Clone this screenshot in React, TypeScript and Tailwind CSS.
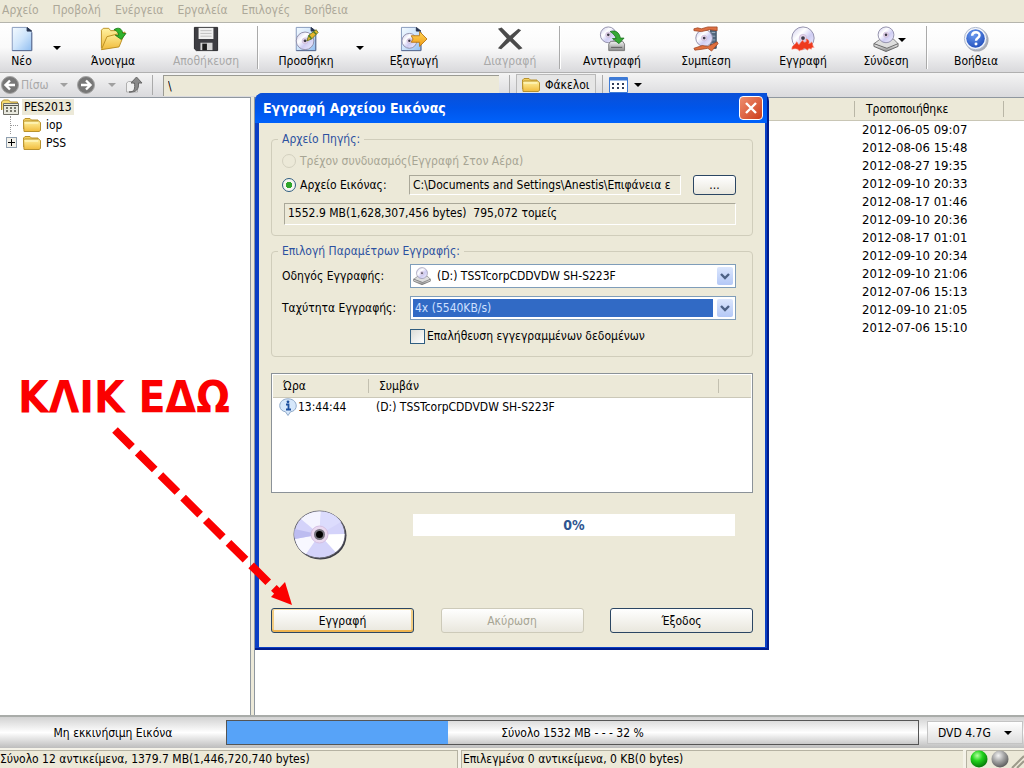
import type { ReactNode } from 'react'
import { clsx } from 'clsx'

const menuItems = [
  'Αρχείο',
  'Προβολή',
  'Ενέργεια',
  'Εργαλεία',
  'Επιλογές',
  'Βοήθεια',
]

const modifiedDates = [
  '2012-06-05 09:07',
  '2012-08-06 15:48',
  '2012-08-27 19:35',
  '2012-09-10 20:33',
  '2012-08-17 01:46',
  '2012-09-10 20:36',
  '2012-08-17 01:01',
  '2012-09-10 20:34',
  '2012-09-10 21:06',
  '2012-07-06 15:13',
  '2012-09-10 21:05',
  '2012-07-06 15:10',
]

// Gradients shared by all of the icons
function IconDefs() {
  return (
    <svg className="absolute size-0" aria-hidden="true">
      <defs>
        <linearGradient id="page" x1="0" y1="0" x2="1" y2="1">
          <stop offset="0" stopColor="#f4faff" />
          <stop offset="0.5" stopColor="#cfe5fb" />
          <stop offset="1" stopColor="#8fbdf0" />
        </linearGradient>
        <linearGradient id="folder" x1="0" y1="0" x2="0" y2="1">
          <stop offset="0" stopColor="#fff2a0" />
          <stop offset="1" stopColor="#f0bb3c" />
        </linearGradient>
        <linearGradient id="disc" x1="0" y1="0" x2="1" y2="1">
          <stop offset="0" stopColor="#c9c6ea" />
          <stop offset="0.35" stopColor="#ffffff" />
          <stop offset="0.6" stopColor="#cfcdf3" />
          <stop offset="1" stopColor="#f4f2ff" />
        </linearGradient>
        <linearGradient id="drive-body" x1="0" y1="0" x2="0" y2="1">
          <stop offset="0" stopColor="#f2f2f2" />
          <stop offset="1" stopColor="#8a8a8a" />
        </linearGradient>
        <linearGradient id="arrow" x1="0" y1="0" x2="0" y2="1">
          <stop offset="0" stopColor="#ffd75a" />
          <stop offset="1" stopColor="#f09a12" />
        </linearGradient>
        <radialGradient id="help" cx="0.4" cy="0.3" r="0.8">
          <stop offset="0" stopColor="#6b9bf0" />
          <stop offset="1" stopColor="#1c49b8" />
        </radialGradient>
        <radialGradient id="gray-ball" cx="0.4" cy="0.3" r="0.7">
          <stop offset="0" stopColor="#f4f4f4" />
          <stop offset="0.5" stopColor="#a4a4a4" />
          <stop offset="1" stopColor="#5e5e5e" />
        </radialGradient>
        <radialGradient id="green-ball" cx="0.4" cy="0.3" r="0.7">
          <stop offset="0" stopColor="#b4ffa0" />
          <stop offset="0.45" stopColor="#22d31c" />
          <stop offset="1" stopColor="#067a08" />
        </radialGradient>
      </defs>
    </svg>
  )
}

type SvgProps = {
  className?: string
  children: ReactNode
}

function ToolSvg({ className = 'size-7', children }: SvgProps) {
  return (
    <svg viewBox="0 0 28 28" className={className} aria-hidden="true">
      {children}
    </svg>
  )
}

function Disc({ cx, cy, r }: { cx: number; cy: number; r: number }) {
  return (
    <g>
      <circle cx={cx} cy={cy} r={r} fill="url(#disc)" stroke="#8f8ca8" />
      <circle cx={cx} cy={cy} r={r / 3} fill="#e6d6ec" stroke="#c3b2cf" strokeWidth="0.6" />
      <circle cx={cx} cy={cy} r={r / 6} fill="#3c3a48" />
    </g>
  )
}

function Page() {
  return (
    <g>
      <path d="M3.5 1.5h15l6 5v20h-21z" fill="url(#page)" stroke="#8296bb" />
      <path d="M24.5 7v19.5H3.5" fill="none" stroke="#56688f" />
      <path d="M19.5 1.5v4h5z" fill="#27344f" stroke="#27344f" />
    </g>
  )
}

function NewIcon() {
  return (
    <ToolSvg>
      <Page />
    </ToolSvg>
  )
}

function OpenIcon() {
  return (
    <ToolSvg>
      <path d="M1.5 24V4.5l2-2h6l2 2.500h9v4" fill="url(#folder)" stroke="#b98d1f" />
      <path d="M1.5 25.5l6-14 19.5-5-6.5 16z" fill="url(#folder)" stroke="#b98d1f" />
      <path
        d="M15 4c5-3.5 9-1 9.5 4H28l-5 6.500L16.500 10H20c0-3-2-5-5-6z"
        fill="#2fb32b"
        stroke="#13700f"
        strokeWidth="0.8"
      />
    </ToolSvg>
  )
}

function SaveIcon() {
  return (
    <ToolSvg>
      <path d="M1.500 1.500h25v25h-23l-2-2z" fill="#3d3d42" stroke="#232326" />
      <path d="M6 2h16v12H6z" fill="#f0f0f0" />
      <path d="M8 5h12M8 8h12M8 11h12" stroke="#bdbdbd" />
      <path d="M8 18h13v8H8z" fill="#d5d5d5" />
      <path d="M10 19h5v7h-5z" fill="#1c1c1c" />
    </ToolSvg>
  )
}

function AddIcon() {
  return (
    <ToolSvg>
      <Page />
      <Disc cx={13} cy={16} r={9.5} />
      <path d="M15 16l2-6 8-6 2 3-7 7z" fill="#e8b62b" stroke="#6c7a22" />
      <path d="M17 10l3 4M22 6l3 3" stroke="#4b7d2a" strokeWidth="1.5" />
    </ToolSvg>
  )
}

function ExtractIcon() {
  return (
    <ToolSvg>
      <g transform="translate(-3)">
        <Page />
        <Disc cx={12} cy={16} r={8} />
      </g>
      <path d="M11 10.5h9V6l8 8-8 8v-4.500h-9l2-3.500z" fill="url(#arrow)" stroke="#b9791b" />
    </ToolSvg>
  )
}

function DeleteIcon() {
  return (
    <ToolSvg>
      <path
        d="M1 3l4-1.500 9 9L23 3l3 1.500-9 9L27.500 24l-4 1.500L14 16.500 4.500 25 1 24l9.500-10.500z"
        fill="#4b4b4b"
      />
    </ToolSvg>
  )
}

function CopyIcon() {
  return (
    <ToolSvg>
      <Disc cx={10} cy={9.5} r={8.5} />
      <path d="M10.500 19.500l2-3h13l2 3v7h-17z" fill="url(#drive-body)" stroke="#777" />
      <path d="M13 23h12" stroke="#555" />
      <path
        d="M12 6c6-2 10 1 11 7h4l-5.500 6-7-5.500h4c-1-3-3-5-6.500-7.500z"
        fill="#36a836"
        stroke="#17701a"
        strokeWidth="0.8"
      />
    </ToolSvg>
  )
}

function CompressIcon() {
  return (
    <ToolSvg>
      <path d="M19 3h6v21h-6z" fill="#52687f" stroke="#33465a" />
      <path d="M20 7h4M20 11h4M20 15h4M20 19h4" stroke="#9fb1c4" />
      <Disc cx={12} cy={13} r={9} />
      <path d="M1 3l4-1 4 1 7-2h10v4l-8-1-9 2-8-1z" fill="#dd7043" stroke="#9c4420" strokeWidth="0.8" />
      <path
        d="M1 24l9-3 6 1 10-5 1 2-7 8-4-3-6 1-8 1z"
        fill="#e0703e"
        stroke="#9c4420"
        strokeWidth="0.8"
      />
    </ToolSvg>
  )
}

function BurnIcon() {
  return (
    <ToolSvg>
      <Disc cx={14} cy={13} r={12} />
      <path
        d="M2 25c0-5 4-4 5-8 2 1 1 3 3 3 1-2 2-3 4-5 0 3 2 3 3 2 1 0 1-2 0-3 4 0 4 4 3 5 2 0 3-1 3-2 2 2 1 5 3 6-2 0-3 0-3 2-2-1-3-1-4 1-1 0-2-2-4-2-1 3-4 1-5 3-1-3-5-3-8-2z"
        fill="#ee3a1e"
        stroke="#f8816a"
        strokeWidth="0.6"
      />
    </ToolSvg>
  )
}

function MountIcon({ className = 'size-7' }: { className?: string }) {
  return (
    <ToolSvg className={className}>
      <path d="M1 19l7-5h14l5 5-10 7z" fill="#dedede" stroke="#7c7c7c" />
      <path d="M1 19v3l13 5.500L27 22v-3l-12 5z" fill="url(#drive-body)" stroke="#666" />
      <Disc cx={14} cy={9.5} r={8.5} />
    </ToolSvg>
  )
}

function HelpIcon() {
  return (
    <ToolSvg>
      <circle cx="15" cy="15" r="12.5" fill="#a9adb6" />
      <circle cx="13.5" cy="13.5" r="12" fill="#f3f6fc" stroke="#a7b2c8" />
      <circle cx="13.5" cy="13.5" r="10" fill="url(#help)" />
      <path
        d="M9.800 10.500c.2-5 8-5 8-.5 0 3-3.800 3-3.800 6"
        fill="none"
        stroke="#fff"
        strokeWidth="2.6"
      />
      <circle cx="14" cy="19.5" r="1.6" fill="#fff" />
    </ToolSvg>
  )
}

function FolderIcon() {
  return (
    <svg viewBox="0 0 20 16" className="h-4 w-5" aria-hidden="true">
      <path d="M1.500 12V3L3 1.500h5L9.500 3H16v2" fill="#f3cf5e" stroke="#b8922f" />
      <path d="M2 14.500L1.500 5l1-1h14l2 1.500v8l-1.500 1z" fill="url(#folder)" stroke="#b8922f" />
      <path d="M3 6h13" stroke="#fffbd0" />
    </svg>
  )
}

function ProjectIcon() {
  return (
    <svg viewBox="0 0 20 16" className="h-4 w-5" aria-hidden="true">
      <path d="M1.500 11V3l2-2h5l2 2h7v3" fill="#f7dc74" stroke="#ae8b31" />
      <path d="M3.500 4.500h15v11h-15z" fill="#e9e9df" stroke="#6f6f66" />
      <path d="M4 6.500h14" stroke="#56564e" />
      <path d="M7 8v6M11 8v6M15 8v6" stroke="#77776c" strokeDasharray="2 1" strokeWidth="2" />
    </svg>
  )
}

function RoundArrow({ back }: { back?: boolean }) {
  return (
    <svg viewBox="0 0 20 20" className="size-5 shrink-0" aria-hidden="true">
      <circle cx="10" cy="10" r="8.5" fill="#777" stroke="#a5a5a5" />
      <path
        d={back ? 'M15 10H6M10 5.500L5.500 10l4.500 4.500' : 'M5 10h9M10 5.500l4.500 4.500-4.500 4.500'}
        fill="none"
        stroke="#fff"
        strokeWidth="2.4"
      />
    </svg>
  )
}

function UpIcon() {
  return (
    <svg viewBox="0 0 20 20" className="size-5" aria-hidden="true">
      <path d="M2.500 17V8l2-1.500h4l1 2h4V17z" fill="#f1f1f1" stroke="#b0b0b0" />
      <path
        d="M5 17c6 0 6-4 5.500-9H7l5.500-6L18 8h-3.500c.5 6-2 9.500-9.500 9z"
        fill="#8a8a8a"
        stroke="#666"
      />
    </svg>
  )
}

function CaretDown({ className }: { className?: string }) {
  return (
    <svg viewBox="0 0 8 4" className={clsx('h-1 w-2 shrink-0', className)} aria-hidden="true">
      <path d="M0 0h8L4 4z" fill="currentColor" />
    </svg>
  )
}

type ToolButtonProps = {
  label: string
  icon: ReactNode
  className: string
  disabled?: boolean
}

function ToolButton({ label, icon, className, disabled }: ToolButtonProps) {
  return (
    <button
      type="button"
      disabled={disabled}
      className={clsx(
        'flex shrink-0 flex-col items-center gap-px whitespace-nowrap disabled:text-[#a9a9a9]',
        className,
      )}
    >
      {icon}
      <span>{label}</span>
    </button>
  )
}

function ToolMenuButton({ label, className }: { label: string; className: string }) {
  return (
    <button
      type="button"
      aria-label={label}
      className={clsx('flex shrink-0 justify-center pt-5', className)}
    >
      <CaretDown />
    </button>
  )
}

function Separator() {
  return <div className="w-0.5 shrink-0 border-l border-[#aaa] bg-white" />
}

function Toolbar() {
  return (
    <div className="flex h-[50px] shrink-0 overflow-hidden border-t border-[#b5b5ad] bg-linear-to-b from-white via-[#fafafa] to-[#d9d9dc] py-[3px]">
      <ToolButton label="Νέο" icon={<NewIcon />} className="w-[43px]" />
      <ToolMenuButton label="Επιλογές νέου" className="w-7" />
      <ToolButton label="Άνοιγμα" icon={<OpenIcon />} className="w-[84px]" />
      <ToolButton label="Αποθήκευση" icon={<SaveIcon />} className="w-[102px]" disabled />
      <Separator />
      <ToolButton label="Προσθήκη" icon={<AddIcon />} className="w-[94px]" />
      <ToolMenuButton label="Επιλογές προσθήκης" className="w-3.5" />
      <ToolButton label="Εξαγωγή" icon={<ExtractIcon />} className="w-[94px]" />
      <ToolButton label="Διαγραφή" icon={<DeleteIcon />} className="w-[98px]" disabled />
      <Separator />
      <ToolButton label="Αντιγραφή" icon={<CopyIcon />} className="w-[102px]" />
      <ToolButton label="Συμπίεση" icon={<CompressIcon />} className="w-[86px]" />
      <ToolButton label="Εγγραφή" icon={<BurnIcon />} className="w-[108px]" />
      <div className="relative flex w-[69px] shrink-0">
        <ToolButton label="Σύνδεση" icon={<MountIcon />} className="w-[58px]" />
        <CaretDown className="pointer-events-none absolute top-3 right-5" />
      </div>
      <Separator />
      <ToolButton label="Βοήθεια" icon={<HelpIcon />} className="w-24" />
    </div>
  )
}

function NavigationBar() {
  return (
    <div className="flex h-[25px] shrink-0 items-center border-t border-[#b0b0b0] bg-linear-to-b from-[#f4f4f4] to-[#dadadd]">
      <button type="button" disabled className="flex w-[60px] items-center gap-px text-[#a9a9a9]">
        <RoundArrow back />
        Πίσω
      </button>
      <CaretDown className="mr-2 text-[#a0a0a0]" />
      <button type="button" aria-label="Μπροστά" className="flex">
        <RoundArrow />
      </button>
      <CaretDown className="mr-2 ml-3 text-[#a0a0a0]" />
      <button type="button" aria-label="Επάνω" className="flex">
        <UpIcon />
      </button>
      <div className="mr-2.5 ml-2 h-5 w-px bg-[#aaa]" />
      <input
        aria-label="Διαδρομή"
        readOnly
        value="\"
        className="h-[21px] w-[336px] border-t border-l border-[#9b9b93] bg-[#ece9d8] px-1 outline-none"
      />
      <div className="mr-1.5 ml-2.5 h-5 w-px bg-[#aaa]" />
      <button
        type="button"
        className="flex h-[23px] w-20 items-center gap-1 border border-[#b9b9b9] bg-[#e6e6e6] pl-1"
      >
        <FolderIcon />
        Φάκελοι
      </button>
      <div className="mx-1.5 h-5 w-px bg-[#aaa]" />
      <button type="button" aria-label="Προβολή λίστας" className="flex items-center gap-1.5">
        <svg viewBox="0 0 19 16" className="h-4 w-[19px]" aria-hidden="true">
          <path d="M.5.5h18v15H.5z" fill="#fff" stroke="#3d7ad6" />
          <path d="M1 2h17" stroke="#3d7ad6" strokeWidth="3" />
          <path d="M3 7h13M3 11h13" stroke="#333f5c" strokeWidth="2" strokeDasharray="2 3" />
        </svg>
        <CaretDown />
      </button>
    </div>
  )
}

function FolderTree() {
  return (
    <nav
      aria-label="Φάκελοι"
      className="w-[251px] shrink-0 border-t border-r border-[#8f979f] bg-white"
    >
      <ul>
        <li className="flex h-[18px] items-center">
          <ProjectIcon />
          <span className="ml-0.5 bg-[#ece9d8] px-0.5 leading-4">PES2013</span>
        </li>
        <li className="flex h-[18px] items-center gap-1">
          <span className="ml-2.5 flex h-full w-2 items-center border-l border-dotted border-[#999]">
            <span className="w-full border-t border-dotted border-[#999]" />
          </span>
          <FolderIcon />
          iop
        </li>
        <li className="flex h-[17px] items-center gap-1">
          <button
            type="button"
            aria-label="Ανάπτυξη PSS"
            className="mr-px ml-1.5 flex size-[11px] items-center justify-center border border-[#8f9fb0] bg-[#f3f1ea]"
          >
            <svg viewBox="0 0 7 7" className="size-[7px]" aria-hidden="true">
              <path d="M0 3.500h7M3.500 0v7" stroke="#000" />
            </svg>
          </button>
          <FolderIcon />
          PSS
        </li>
      </ul>
    </nav>
  )
}

function FileList() {
  return (
    <div className="min-w-0 flex-1 overflow-hidden border-t border-l border-[#8f979f] bg-white">
      <table className="w-full table-fixed border-collapse text-left">
        <thead>
          <tr className="h-[22px] border-b border-[#c9c6b5] bg-[#ece9d8]">
            <td />
            <th scope="col" className="w-[150px] font-normal">
              <span className="block border-x border-[#b9b6a6] px-[11px] leading-4">
                Τροποποιήθηκε
              </span>
            </th>
            <td className="w-5" />
          </tr>
        </thead>
        <tbody className="text-[13px]">
          {modifiedDates.map((date) => (
            <tr key={date} className="h-[18px] leading-[18px]">
              <td />
              <td className="pl-2">{date}</td>
              <td />
            </tr>
          ))}
        </tbody>
      </table>
    </div>
  )
}

function CapacityBar() {
  return (
    <div className="flex h-[33px] shrink-0 items-center border-t-2 border-[#a9aca9] bg-linear-to-b from-[#d2d2d2] via-white to-[#bdbdbd]">
      <span className="w-[226px] shrink-0 text-center">Μη εκκινήσιμη Εικόνα</span>
      <div className="relative flex h-[25px] flex-1 items-center border border-[#555] bg-linear-to-b from-[#dcdcdc] via-white to-[#c9c9c9]">
        <div className="h-full w-[32%] bg-[#57a3f8]" />
        <span className="absolute inset-x-0 text-center">Σύνολο 1532 MB - - - 32 %</span>
      </div>
      <button
        type="button"
        className="mr-px ml-2 flex h-[23px] w-24 items-center justify-between border border-[#c4c4c4] bg-linear-to-b from-white to-[#dedede] px-2.5"
      >
        DVD 4.7G
        <CaretDown />
      </button>
    </div>
  )
}

function StatusBar() {
  return (
    <footer className="flex h-5 shrink-0 gap-[3px] overflow-hidden bg-[#f4f2e8] pt-0.5">
      <p className="w-[458px] border-t border-r border-[#b5b2a2] bg-[#ece9d8] leading-4 whitespace-nowrap">
        Σύνολο 12 αντικείμενα, 1379.7 MB(1,446,720,740 bytes)
      </p>
      <p className="flex-1 border-t border-l border-[#b5b2a2] bg-[#ece9d8] pl-px leading-4 whitespace-nowrap">
        Επιλεγμένα 0 αντικείμενα, 0 KB(0 bytes)
      </p>
      <svg viewBox="0 0 58 18" className="h-[18px] w-[58px] bg-[#ece9d8]" aria-hidden="true">
        <path d="M.5 18V.5H58" fill="none" stroke="#b5b2a2" />
        <circle cx="13" cy="9" r="8.5" fill="url(#green-ball)" />
        <circle cx="34" cy="9" r="8.5" fill="url(#gray-ball)" />
        <path d="M46 18L58 6M51 18l7-7" stroke="#9d9a8b" strokeWidth="2" />
      </svg>
    </footer>
  )
}

type ComboBoxProps = {
  id: string
  label: string
  value: string
  icon?: ReactNode
  selected?: boolean
}

function ComboBox({ id, label, value, icon, selected }: ComboBoxProps) {
  return (
    <div className="flex items-center">
      <label htmlFor={id} className="w-[128px] shrink-0 whitespace-nowrap">
        {label}
      </label>
      <div className="relative h-6 flex-1 border border-[#7f9db9] bg-white p-0.5">
        <select
          id={id}
          className={clsx(
            'block h-[18px] w-[calc(100%-20px)] appearance-none outline-none',
            selected ? 'bg-[#316ac5] pl-0.5 text-[#cfe0ff]' : 'bg-white pl-6',
          )}
        >
          <option>{value}</option>
        </select>
        {icon && <span className="pointer-events-none absolute top-0.5 left-0.5">{icon}</span>}
        <span className="pointer-events-none absolute top-0.5 right-0.5 flex h-[18px] w-4 items-center justify-center rounded-xs bg-linear-to-b from-[#dbe6fd] to-[#b4c8f6]">
          <svg viewBox="0 0 10 7" className="h-[7px] w-2.5" aria-hidden="true">
            <path d="M1 1l4 4 4-4" fill="none" stroke="#4d6185" strokeWidth="2.4" />
          </svg>
        </span>
      </div>
    </div>
  )
}

type DialogButtonProps = {
  label: string
  primary?: boolean
  disabled?: boolean
}

function DialogButton({ label, primary, disabled }: DialogButtonProps) {
  return (
    <button
      type="button"
      disabled={disabled}
      className={clsx(
        'h-[25px] w-[143px] rounded-[3px] border bg-linear-to-b from-white to-[#e9e7dd]',
        disabled ? 'border-[#cdcab9] text-[#a7a594]' : 'border-[#2b4663]',
        primary && 'inset-shadow-[0_-2px_0_#eeb450,0_1px_0_#fbe0a4,2px_0_0_#f3cd82,-2px_0_0_#f3cd82]',
      )}
    >
      {label}
    </button>
  )
}

function EventLog() {
  return (
    <div className="mt-4 h-[120px] border border-[#8b9298] bg-white p-px">
      <table className="w-full table-fixed border-collapse text-left">
        <thead>
          <tr className="h-[22px] border-b border-[#cbc8b8] bg-[#ece9d8]">
            <th scope="col" className="w-[95px] pl-2.5 font-normal">
              Ώρα
            </th>
            <th scope="col" className="font-normal">
              <span className="block border-x border-[#c3c0b0] pl-2.5 leading-3.5">Συμβάν</span>
            </th>
            <td className="w-8" />
          </tr>
        </thead>
        <tbody>
          <tr className="h-5">
            <td>
              <span className="flex items-center gap-px pl-1.5">
                <svg viewBox="0 0 18 18" className="size-[18px]" aria-hidden="true">
                  <path
                    d="M9 .8c10 0 11 12 2.500 13L9 17.500 6.500 13.800C-2 12.500-1 .8 9 .8z"
                    fill="#d7e8fb"
                    stroke="#8fa9c9"
                  />
                  <circle cx="9" cy="3.8" r="1.4" fill="#1d4f9e" />
                  <path
                    d="M7 6.500h2.500V11M7 11.500h5"
                    fill="none"
                    stroke="#1d4f9e"
                    strokeWidth="1.8"
                  />
                </svg>
                13:44:44
              </span>
            </td>
            <td className="pl-2" colSpan={2}>
              (D:) TSSTcorpCDDVDW SH-S223F
            </td>
          </tr>
        </tbody>
      </table>
    </div>
  )
}

function CompactDisc() {
  return (
    <svg viewBox="0 0 54 50" className="ml-[22px] h-[50px] w-[54px]" aria-hidden="true">
      <ellipse cx="27.5" cy="25.5" rx="26" ry="24" fill="#3b3b44" />
      <ellipse cx="26.5" cy="24.5" rx="25.5" ry="23.5" fill="#d4d3fa" stroke="#66666f" />
      <path d="M26.500 24.500L8 9C14 3 21 1.500 28 1.500z" fill="#f4f4ff" />
      <path d="M26.500 24.500L28 1.500C38 2 44 6 48 12z" fill="#dcdcfd" />
      <path d="M26.500 24.500L51.500 24c0 10-5 15-9 18z" fill="#fff" />
      <path d="M26.500 24.500L2 29c2 8 6 13 11 15z" fill="#f8f8ff" />
      <path d="M26.500 24.500L1.500 19C1 24 1 27 2 29z" fill="#bcbcf0" />
      <circle cx="26.5" cy="24.5" r="8.5" fill="#ead9f0" stroke="#d5bfe2" />
      <circle cx="26.5" cy="24.5" r="5.5" fill="#77747e" />
      <circle cx="26.5" cy="24.5" r="3.5" fill="#000" />
    </svg>
  )
}

function BurnDialog() {
  return (
    <div
      role="dialog"
      aria-labelledby="burn-title"
      className="absolute top-[93px] left-[255px] w-[514px] rounded-t-lg border-r-2 border-b-2 border-[#001c8c] bg-[#0b3fc4] pr-0.5 pb-px pl-1"
    >
      <div className="-mr-0.5 -ml-1 flex h-[30px] items-center justify-between rounded-tl-lg bg-linear-to-b from-[#0a50d8] via-[#0055ea] to-[#0062fb] pr-1 pl-2">
        <h1 id="burn-title" className="text-sm font-bold text-white">
          Εγγραφή Αρχείου Εικόνας
        </h1>
        <button
          type="button"
          aria-label="Κλείσιμο"
          className="flex size-6 items-center justify-center rounded-[4px] border border-white bg-linear-to-br from-[#ee8d6d] to-[#cc3a16]"
        >
          <svg viewBox="0 0 14 14" className="size-3.5" aria-hidden="true">
            <path d="M2 2l10 10M12 2L2 12" stroke="#fff" strokeWidth="2.4" />
          </svg>
        </button>
      </div>
      <div className="bg-[#ece9d8] px-3 pt-2 pb-3.5">
        <fieldset className="rounded border border-[#d0cdbb] pr-4 pb-2.5 pl-2.5">
          <legend className="-ml-1 px-1 leading-4 text-[#2c51a0]">Αρχείο Πηγής:</legend>
          <div className="flex flex-col gap-2 pt-1">
            <label className="flex h-5 items-center gap-1 text-[#a7a594]">
              <input
                type="radio"
                name="source"
                disabled
                className="size-3.5 appearance-none rounded-full border border-[#d3d0bf]"
              />
              Τρέχον συνδυασμός(Εγγραφή Στον Αέρα)
            </label>
            <div className="-mt-1 flex items-center">
              <label className="flex w-[127px] shrink-0 items-center gap-1 whitespace-nowrap">
                <input
                  type="radio"
                  name="source"
                  defaultChecked
                  className="size-3.5 appearance-none rounded-full border border-[#2f5d80] bg-[radial-gradient(circle,#2fa52b_3px,#f5f5f0_3px)]"
                />
                Αρχείο Εικόνας:
              </label>
              <input
                aria-label="Διαδρομή εικόνας"
                readOnly
                value="C:\Documents and Settings\Anestis\Επιφάνεια ε"
                className="h-5 w-[272px] border border-t-[#aaa899] border-r-white border-b-white border-l-[#aaa899] pl-[3px] outline-none"
              />
              <button
                type="button"
                aria-label="Αναζήτηση"
                className="ml-auto h-5 w-[43px] rounded-[3px] border border-[#2b4663] bg-linear-to-b from-white to-[#e9e7dd] leading-3.5"
              >
                ...
              </button>
            </div>
            <p className="ml-0.5 h-[22px] border border-t-[#aaa899] border-r-white border-b-white border-l-[#aaa899] pl-[3px] leading-[18px] whitespace-pre">
              1552.9 MB(1,628,307,456 bytes)  795,072 τομείς
            </p>
          </div>
        </fieldset>
        <fieldset className="mt-[7px] rounded border border-[#d0cdbb] pr-4 pb-3 pl-2.5">
          <legend className="-ml-1 px-1 leading-4 text-[#2c51a0]">
            Επιλογή Παραμέτρων Εγγραφής:
          </legend>
          <div className="flex flex-col gap-2 pt-[5px]">
            <ComboBox
              id="drive"
              label="Οδηγός Εγγραφής:"
              value="(D:) TSSTcorpCDDVDW SH-S223F"
              icon={<MountIcon className="size-[18px]" />}
            />
            <ComboBox id="speed" label="Ταχύτητα Εγγραφής:" value="4x (5540KB/s)" selected />
            <label className="ml-[128px] flex items-center gap-0.5">
              <input
                type="checkbox"
                className="size-[15px] appearance-none border border-[#2f5d80] bg-linear-to-br from-[#dcdcd7] to-white"
              />
              Επαλήθευση εγγεγραμμένων δεδομένων
            </label>
          </div>
        </fieldset>
        <EventLog />
        <div className="mt-[17px] flex items-center">
          <CompactDisc />
          <div
            role="progressbar"
            aria-label="Πρόοδος εγγραφής"
            aria-valuenow={0}
            className="mr-[18px] mb-5 ml-[66px] h-[22px] flex-1 bg-white text-center text-sm leading-[22px] font-bold text-[#2f5591]"
          >
            0%
          </div>
        </div>
        <div className="mt-12 flex justify-between">
          <DialogButton label="Εγγραφή" primary />
          <DialogButton label="Ακύρωση" disabled />
          <DialogButton label="Έξοδος" />
        </div>
      </div>
    </div>
  )
}

function ClickHint() {
  return (
    <div className="pointer-events-none absolute top-[372px] left-[18px]">
      <p className="text-[44px] leading-[52px] font-bold whitespace-nowrap text-[#fb0000]">
        ΚΛΙΚ ΕΔΩ
      </p>
      <svg viewBox="0 0 200 190" className="ml-[92px] h-[190px] w-[200px]" aria-hidden="true">
        <path
          d="M5 6l164 163"
          fill="none"
          stroke="#fb0000"
          strokeWidth="8"
          strokeDasharray="24 8"
        />
        <path d="M182 181l-21-8 14-15z" fill="#fb0000" />
      </svg>
    </div>
  )
}

export default function App() {
  return (
    <div className="relative flex h-screen flex-col overflow-hidden bg-[#ece9d8] font-['DejaVu_Sans_Condensed','DejaVu_Sans',sans-serif] text-xs text-black">
      <IconDefs />
      <nav aria-label="Μενού" className="flex h-[22px] shrink-0 gap-3.5 pl-0.5 leading-5">
        {menuItems.map((item) => (
          <button key={item} type="button" className="self-start text-[#aca899]">
            {item}
          </button>
        ))}
      </nav>
      <Toolbar />
      <NavigationBar />
      <main className="flex min-h-0 flex-1 gap-[3px]">
        <FolderTree />
        <FileList />
      </main>
      <CapacityBar />
      <StatusBar />
      <BurnDialog />
      <ClickHint />
    </div>
  )
}
